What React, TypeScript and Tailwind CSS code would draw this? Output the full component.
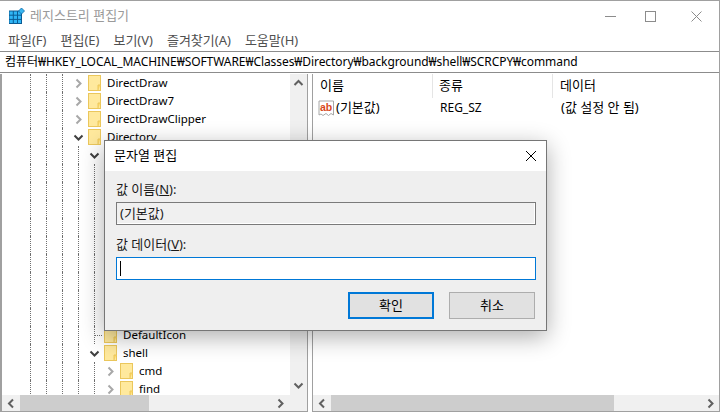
type Dir = "up" | "down" | "left" | "right";

const arrowPaths: Record<Dir, string> = {
  up: "M1.5 7 L5.5 3 L9.5 7",
  down: "M1.5 3.5 L5.5 7.5 L9.5 3.5",
  left: "M7 1.5 L3 5.5 L7 9.5",
  right: "M3.5 1.5 L7.5 5.5 L3.5 9.5",
};

function Arrow({ dir, className = "text-[#606060]", width = 2 }: { dir: Dir; className?: string; width?: number }) {
  return (
    <svg width="11" height="11" viewBox="0 0 11 11" fill="none" stroke="currentColor" strokeWidth={width} className={className}>
      <path d={arrowPaths[dir]} />
    </svg>
  );
}

function Folder() {
  return (
    <svg width="13" height="16" viewBox="0 0 13 16" className="shrink-0">
      <rect x="0.5" y="0.5" width="12" height="15" fill="#ffe99d" stroke="#ebc75c" />
      <path d="M10 15.5 V10 H12.5" fill="#ffd966" stroke="#ebc75c" />
    </svg>
  );
}

function Guide() {
  return (
    <span className="flex h-full w-4 shrink-0 justify-center">
      <span className="h-full w-0 border-l border-dotted border-[#707070]" />
    </span>
  );
}

type Node = { label: string; level: number; state?: "open" | "closed" | "leaf"; };

// rows with an empty label sit behind the dialog
const rows: Node[] = [
  { label: "DirectDraw", level: 3, state: "closed" },
  { label: "DirectDraw7", level: 3, state: "closed" },
  { label: "DirectDrawClipper", level: 3, state: "closed" },
  { label: "Directory", level: 3, state: "open" },
  { label: "", level: 4, state: "open" },
  { label: "", level: 5, state: "open" },
  { label: "", level: 6, state: "closed" },
  { label: "", level: 6, state: "closed" },
  { label: "", level: 6, state: "closed" },
  { label: "", level: 6, state: "open" },
  { label: "", level: 7, state: "leaf" },
  { label: "", level: 5, state: "closed" },
  { label: "", level: 5, state: "closed" },
  { label: "", level: 5, state: "closed" },
  { label: "DefaultIcon", level: 4, state: "leaf" },
  { label: "shell", level: 4, state: "open" },
  { label: "cmd", level: 5, state: "closed" },
  { label: "find", level: 5, state: "closed" },
];

function TreeRow({ node }: { node: Node }) {
  return (
    <div className="flex h-[18px] items-center whitespace-nowrap pl-5">
      {Array.from({ length: node.level }).map((_, i) => (
        <Guide key={i} />
      ))}
      {node.state === "leaf" ? (
        <span className="flex h-full w-4 shrink-0 items-center pl-2">
          <span className="h-full w-0 border-l border-dotted border-[#707070]" />
          <span className="w-2 border-t border-dotted border-[#707070]" />
        </span>
      ) : (
        <span className="flex h-full w-4 shrink-0 items-center justify-center">
          {node.state === "open" ? (
            <Arrow dir="down" className="text-[#404040]" />
          ) : (
            <Arrow dir="right" className="text-[#a8a8a8]" />
          )}
        </span>
      )}
      <span className="ml-[2px] flex">
        <Folder />
      </span>
      <span className="ml-[6px] text-[11.5px] text-black">{node.label}</span>
    </div>
  );
}

function WinButtons() {
  return (
    <div className="flex items-center text-[#8c8c8c]">
      <svg width="11" height="11" viewBox="0 0 11 11" className="mr-[29px]" fill="none" stroke="currentColor"><path d="M0 5.5 H11" /></svg>
      <svg width="11" height="11" viewBox="0 0 11 11" className="mr-[35px]" fill="none" stroke="currentColor"><rect x="0.5" y="0.5" width="10" height="10" /></svg>
      <svg width="11" height="11" viewBox="0 0 11 11" className="mr-[17px]" fill="none" stroke="currentColor"><path d="M0.5 0.5 L10.5 10.5 M10.5 0.5 L0.5 10.5" /></svg>
    </div>
  );
}

export default function App() {
  return (
    <div className="relative h-[413px] w-[720px] overflow-hidden bg-white [font-family:'Noto_Sans','Noto_Sans_CJK_KR',sans-serif]">
      <div className="flex h-[412px] flex-col border-t border-r border-[#a0a0a0]">
        {/* title bar */}
        <div className="flex h-[30px] shrink-0 items-center justify-between pl-[9px]">
          <div className="flex items-center">
            <svg width="16" height="16" viewBox="0 0 16 16">
              <rect x="0" y="3" width="12.5" height="12.5" fill="#2fb5f5" stroke="#0b5c94" strokeWidth="1" />
              <path d="M4.3 3 V15.5 M8.5 3 V15.5 M0 7.2 H12.5 M0 11.4 H12.5" stroke="#0b5c94" strokeWidth="1" />
              <path d="M12.5 0 L15.5 3 L12.5 6 L9.5 3 Z" fill="#39b6f0" stroke="#0b6aa8" strokeWidth="0.8" />
            </svg>
            <span className="ml-[5px] text-[13px] text-[#9a9a9a]">레지스트리 편집기</span>
          </div>
          <WinButtons />
        </div>

        {/* menu */}
        <div className="flex h-[20px] shrink-0 items-center gap-[14px] pl-2 text-[13px] text-[#505050]">
          <span>파일(F)</span>
          <span>편집(E)</span>
          <span>보기(V)</span>
          <span>즐겨찾기(A)</span>
          <span>도움말(H)</span>
        </div>

        {/* address */}
        <div className="flex h-[22px] shrink-0 items-center border-y border-[#8c8c8c] pl-[5px] text-[12px] tracking-[-0.07px] whitespace-nowrap text-black">
          컴퓨터₩HKEY_LOCAL_MACHINE₩SOFTWARE₩Classes₩Directory₩background₩shell₩SCRCPY₩command
        </div>

        {/* panes */}
        <div className="flex min-h-0 flex-1 pt-px">
          <div className="flex w-[308px] shrink-0 flex-col border-r border-b border-l-2 border-[#a0a0a0]">
            <div className="flex min-h-0 flex-1">
              <div className="min-w-0 flex-1 overflow-hidden">
                {rows.map((r, i) => (
                  <TreeRow key={i} node={r} />
                ))}
              </div>
              <div className="flex w-[17px] shrink-0 flex-col items-center justify-between bg-[#f0f0f0] py-[4px]">
                <Arrow dir="up" />
                <Arrow dir="down" />
              </div>
            </div>
            <div className="flex h-[16px] shrink-0 items-center bg-[#f0f0f0]">
              <span className="flex w-[18px] shrink-0 justify-center"><Arrow dir="left" /></span>
              <span className="h-full w-[129px] bg-[#cdcdcd]" />
              <span className="ml-[126px] flex"><Arrow dir="right" /></span>
            </div>
          </div>

          <div className="ml-1 flex min-w-0 flex-1 flex-col border-b border-l border-[#a0a0a0]">
            <div className="flex h-[24px] shrink-0 items-center text-[13px] text-black">
              <span className="h-full w-[120px] border-r border-[#e5e5e5] pt-[2px] pl-[7px]">이름</span>
              <span className="h-full w-[120px] border-r border-[#e5e5e5] pt-[2px] pl-[6px]">종류</span>
              <span className="h-full pt-[2px] pl-[7px]">데이터</span>
            </div>
            <div className="flex h-[20px] shrink-0 items-center text-[13px] text-black">
              <span className="flex w-[120px] items-center pl-[5px]">
                <svg width="17" height="17" viewBox="0 0 17 17" className="shrink-0">
                  <path d="M1 1 H15.5 V15 L13 13.5 L10.5 15.5 L8 13.5 L5 15.5 L3 14 L1 15 Z" fill="#fff" stroke="#a8a8a8" />
                  <text x="2" y="11" fontSize="10.5" fontWeight="700" fill="#d9481c" fontFamily="Liberation Sans, sans-serif">ab</text>
                </svg>
                <span className="ml-[1px]">(기본값)</span>
              </span>
              <span className="w-[121px] pl-[7px] text-[12px]">REG_SZ</span>
              <span className="pl-[7px]">(값 설정 안 됨)</span>
            </div>
            <div className="flex-1" />
            <div className="flex h-[16px] shrink-0 items-center bg-[#f0f0f0]">
              <span className="flex w-[18px] shrink-0 justify-center"><Arrow dir="left" /></span>
              <span className="h-full w-[283px] bg-[#cdcdcd]" />
              <span className="ml-auto mr-[3px] flex"><Arrow dir="right" /></span>
            </div>
          </div>
        </div>
      </div>

      {/* dialog */}
      <div className="absolute top-[140px] left-[104px] flex h-[191px] w-[443px] flex-col border border-[#767676] bg-[#efefef] shadow-[0_6px_22px_rgba(0,0,0,0.32)]">
        <div className="flex h-[30px] shrink-0 items-center justify-between bg-white pr-[9px] pl-[9px] text-[13px] text-black">
          <span>문자열 편집</span>
          <svg width="12" height="12" viewBox="0 0 12 12" fill="none" stroke="#000" strokeWidth="1"><path d="M1 1 L11 11 M11 1 L1 11" /></svg>
        </div>
        <div className="flex flex-1 flex-col pt-[9px] pr-[10px] pl-[11px] text-[13px] text-[#1a1a1a]">
          <label className="h-[22px] leading-[18px]">값 이름(<span className="underline">N</span>):</label>
          <div className="flex h-[23px] items-center border border-[#7a7a7a] bg-[#f0f0f0] pl-[3px] shadow-[inset_-1px_-1px_0_#fff]">(기본값)</div>
          <label className="mt-[9px] h-[23px] leading-[20px]">값 데이터(<span className="underline">V</span>):</label>
          <div className="flex h-[23px] items-center border border-[#0078d7] bg-white pl-[3px]">
            <span className="h-[15px] w-px bg-black" />
          </div>
          <div className="mt-3 flex justify-end gap-[15px] pr-[1px] text-black">
            <button className="h-[27px] w-[86px] border-2 border-[#0078d7] bg-[#e1e1e1]">확인</button>
            <button className="h-[27px] w-[86px] border border-[#adadad] bg-[#e1e1e1]">취소</button>
          </div>
        </div>
      </div>
    </div>
  );
}
